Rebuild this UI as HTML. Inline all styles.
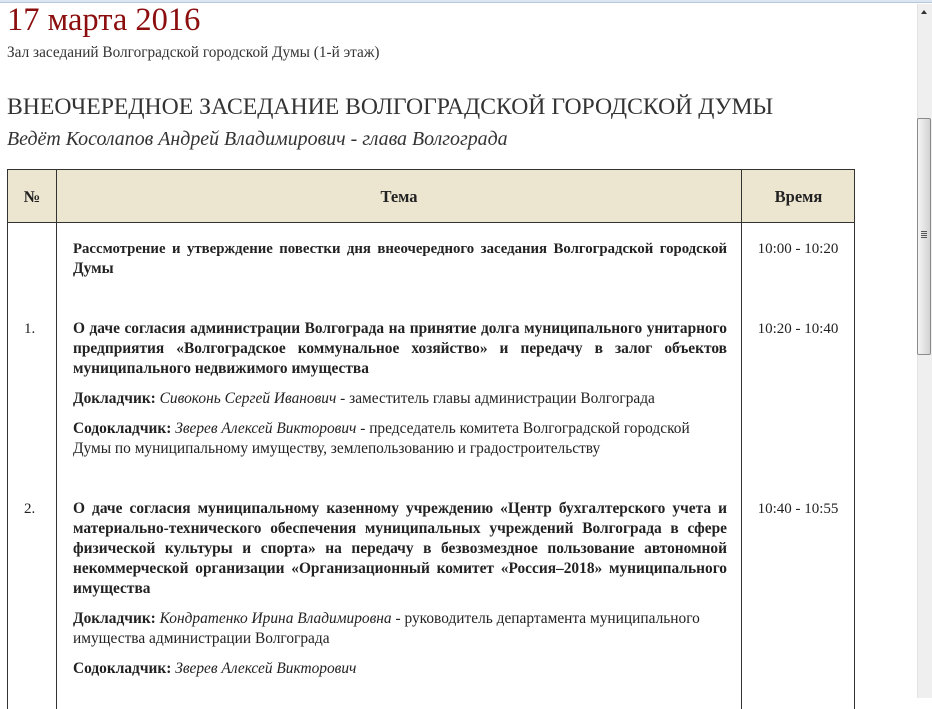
<!DOCTYPE html>
<html><head><meta charset="utf-8"><style>
*{margin:0;padding:0;box-sizing:border-box}
body{width:932px;height:698px;overflow:hidden;background:#fff;font-family:"Liberation Serif","DejaVu Serif",serif;color:#222;position:relative}
.a{position:absolute;white-space:nowrap}
.l{position:absolute;left:73px;height:20px;line-height:20px;font-size:15.4px;white-space:nowrap}
.j{width:654px;text-align:justify;text-align-last:justify;white-space:normal;overflow:hidden}
b{font-weight:bold}
.t{position:absolute;left:741px;width:114px;text-align:center;font-size:15px;line-height:20px}
.n{position:absolute;left:7px;width:49px;padding-left:17px;font-size:15px;line-height:20px}
</style></head><body>
<div class="a" style="left:0;top:0;width:932px;height:3px;background:#dbe6f2;border-bottom:1px solid #b8c8dc"></div>
<div class="a" style="left:7px;top:1px;font-size:32.5px;line-height:38px;color:#8b0d0d">17 марта 2016</div>
<div class="a" style="left:7px;top:44px;font-size:15.3px;line-height:18px;color:#333">Зал заседаний Волгоградской городской Думы (1-й этаж)</div>
<div class="a" style="left:7px;top:92px;font-size:23.7px;line-height:30px;color:#333">ВНЕОЧЕРЕДНОЕ ЗАСЕДАНИЕ ВОЛГОГРАДСКОЙ ГОРОДСКОЙ ДУМЫ</div>
<div class="a" style="left:7px;top:127px;font-size:19.9px;line-height:24px;font-style:italic;color:#333">Ведёт Косолапов Андрей Владимирович - глава Волгограда</div>

<div class="a" style="left:7px;top:169px;width:848px;height:540px;border:1px solid #333;border-bottom:none"></div>
<div class="a" style="left:8px;top:170px;width:846px;height:53px;background:#ece6d1;border-bottom:1px solid #333"></div>
<div class="a" style="left:56px;top:169px;width:1px;height:540px;background:#333"></div>
<div class="a" style="left:741px;top:169px;width:1px;height:540px;background:#333"></div>
<div class="a" style="left:8px;top:187px;width:48px;text-align:center;font-size:16.5px;font-weight:bold;line-height:20px">№</div>
<div class="a" style="left:57px;top:187px;width:684px;text-align:center;font-size:16.5px;font-weight:bold;line-height:20px">Тема</div>
<div class="a" style="left:742px;top:187px;width:113px;text-align:center;font-size:16.5px;font-weight:bold;line-height:20px">Время</div>

<div class="l j" style="top:239px;font-size:14.8px"><b>Рассмотрение и утверждение повестки дня внеочередного заседания Волгоградской городской</b></div>
<div class="l" style="top:259px"><b>Думы</b></div>
<div class="t" style="top:239px">10:00 - 10:20</div>

<div class="n" style="top:319px">1.</div>
<div class="t" style="top:319px">10:20 - 10:40</div>
<div class="l j" style="top:319px"><b>О даче согласия администрации Волгограда на принятие долга муниципального унитарного</b></div>
<div class="l j" style="top:339px"><b>предприятия «Волгоградское коммунальное хозяйство» и передачу в залог объектов</b></div>
<div class="l" style="top:359px"><b>муниципального недвижимого имущества</b></div>
<div class="l" style="top:389px"><b>Докладчик:</b> <i>Сивоконь Сергей Иванович</i> - заместитель главы администрации Волгограда</div>
<div class="l" style="top:419px"><b>Содокладчик:</b> <i>Зверев Алексей Викторович</i> - председатель комитета Волгоградской городской</div>
<div class="l" style="top:439px">Думы по муниципальному имуществу, землепользованию и градостроительству</div>

<div class="n" style="top:499px">2.</div>
<div class="t" style="top:499px">10:40 - 10:55</div>
<div class="l j" style="top:499px"><b>О даче согласия муниципальному казенному учреждению «Центр бухгалтерского учета и</b></div>
<div class="l j" style="top:519px"><b>материально-технического обеспечения муниципальных учреждений Волгограда в сфере</b></div>
<div class="l j" style="top:539px"><b>физической культуры и спорта» на передачу в безвозмездное пользование автономной</b></div>
<div class="l j" style="top:559px"><b>некоммерческой организации «Организационный комитет «Россия–2018» муниципального</b></div>
<div class="l" style="top:579px"><b>имущества</b></div>
<div class="l" style="top:609px"><b>Докладчик:</b> <i>Кондратенко Ирина Владимировна</i> - руководитель департамента муниципального</div>
<div class="l" style="top:629px">имущества администрации Волгограда</div>
<div class="l" style="top:659px"><b>Содокладчик:</b> <i>Зверев Алексей Викторович</i></div>

<div class="a" style="left:917px;top:4px;width:15px;height:694px;background:#efefef;border-left:1px solid #e2e2e2"></div>
<div class="a" style="left:921px;top:10px;width:0;height:0;border-left:3px solid transparent;border-right:3px solid transparent;border-bottom:4px solid #333"></div>
<div class="a" style="left:917px;top:118px;width:14px;height:237px;border:1px solid #8a8a8a;border-radius:2px;background:linear-gradient(to right,#f4f4f4,#e4e4e4 50%,#d2d2d2)"></div>
<div class="a" style="left:921px;top:231px;width:6px;height:1px;background:#555;box-shadow:0 2px 0 #555,0 4px 0 #555,0 6px 0 #555"></div>
</body></html>
